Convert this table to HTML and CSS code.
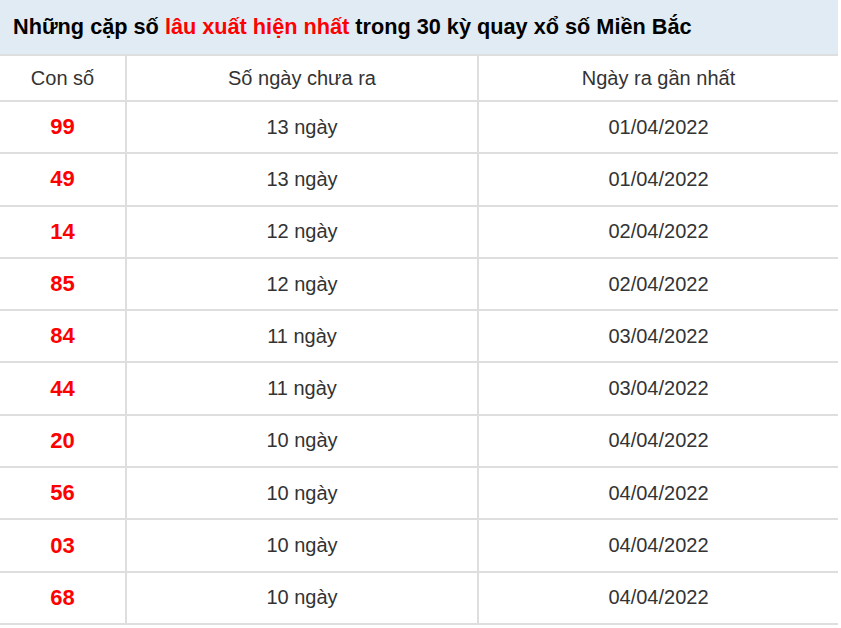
FILE: index.html
```html
<!DOCTYPE html>
<html lang="vi">
<head>
<meta charset="utf-8">
<title>Lô gan Miền Bắc</title>
<link rel="stylesheet" href="styles.css">
</head>
<body>
<div class="box">
  <h2 class="title">Những cặp số <span class="hl">lâu xuất hiện nhất</span> trong 30 kỳ quay xổ số Miền Bắc</h2>
  <table class="tbl">
    <colgroup>
      <col class="c1"><col class="c2"><col class="c3">
    </colgroup>
    <thead>
      <tr><th>Con số</th><th>Số ngày chưa ra</th><th>Ngày ra gần nhất</th></tr>
    </thead>
    <tbody>
      <tr><td class="num">99</td><td>13 ngày</td><td>01/04/2022</td></tr>
      <tr><td class="num">49</td><td>13 ngày</td><td>01/04/2022</td></tr>
      <tr><td class="num">14</td><td>12 ngày</td><td>02/04/2022</td></tr>
      <tr><td class="num">85</td><td>12 ngày</td><td>02/04/2022</td></tr>
      <tr><td class="num">84</td><td>11 ngày</td><td>03/04/2022</td></tr>
      <tr><td class="num">44</td><td>11 ngày</td><td>03/04/2022</td></tr>
      <tr><td class="num">20</td><td>10 ngày</td><td>04/04/2022</td></tr>
      <tr><td class="num">56</td><td>10 ngày</td><td>04/04/2022</td></tr>
      <tr><td class="num">03</td><td>10 ngày</td><td>04/04/2022</td></tr>
      <tr><td class="num">68</td><td>10 ngày</td><td>04/04/2022</td></tr>
    </tbody>
  </table>
</div>
</body>
</html>
```

FILE: styles.css
```css
html, body {
  margin: 0;
  padding: 0;
  background: #fff;
}
body {
  font-family: "Liberation Sans", Arial, sans-serif;
  color: #333;
}
.box {
  width: 838px;
}
.title {
  margin: 0;
  height: 56px;
  box-sizing: border-box;
  padding: 0 0 0 13px;
  display: flex;
  align-items: center;
  background: #e1ebf3;
  border-bottom: 2px solid #dedede;
  font-size: 21.7px;
  font-weight: bold;
  color: #000;
  white-space: pre;
}
.hl {
  color: #ff0000;
}
.tbl {
  width: 838px;
  border-collapse: collapse;
  table-layout: fixed;
}
.c1 { width: 126px; }
.c2 { width: 352px; }
.c3 { width: 360px; }
.tbl th,
.tbl td {
  padding: 0;
  text-align: center;
  font-size: 20px;
  font-weight: normal;
  color: #333;
  border-bottom: 2px solid #dedede;
  border-left: 2px solid #dedede;
}
.tbl th:first-child,
.tbl td:first-child {
  border-left: none;
}
.tbl th {
  height: 44px;
}
.tbl td {
  height: 50.3px;
}
.tbl td.num {
  color: #ff0000;
  font-weight: bold;
  font-size: 22px;
}
```
